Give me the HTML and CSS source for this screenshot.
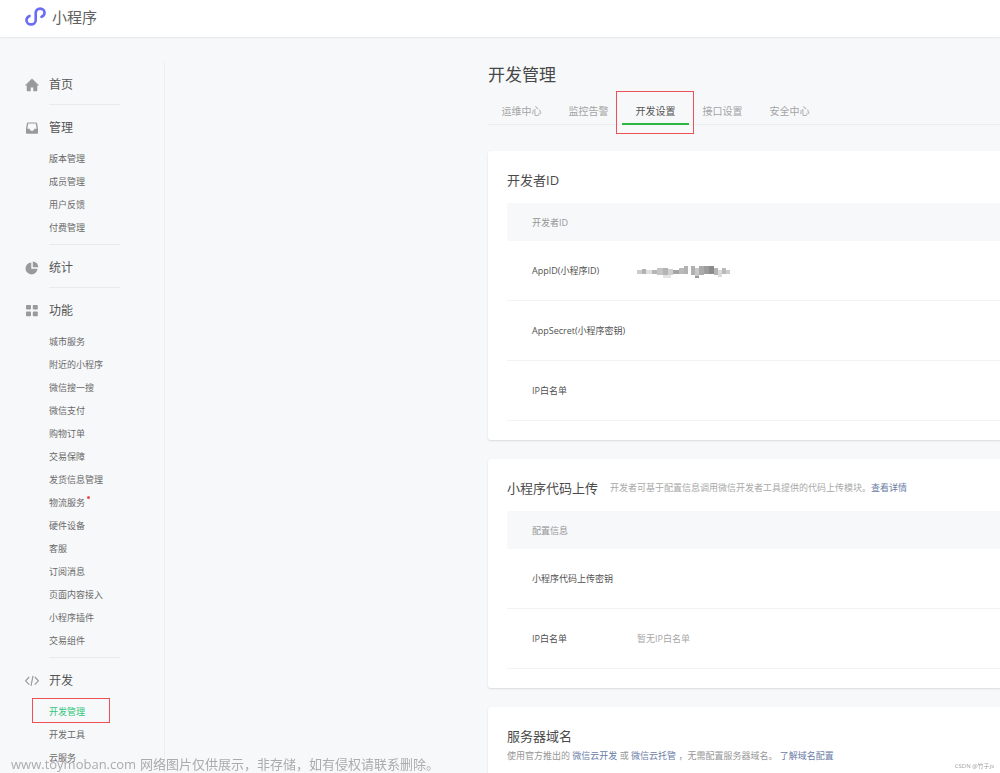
FILE: index.html
```html
<!DOCTYPE html>
<html lang="zh-CN">
<head>
<meta charset="utf-8">
<meta name="viewport" content="width=device-width, initial-scale=1">
<title>小程序 - 开发管理</title>
<link rel="stylesheet" href="styles.css">
</head>
<body>
<div class="app">
  <header class="topbar">
    <a class="brand" href="#">
      <svg class="brand-logo" viewBox="0 0 20 18" aria-hidden="true"><path d="M4.3 8.5C2.6 9.2 1.4 10.7 1.4 12.5c0 2.3 2 4 4.4 4s4.4-1.7 4.4-4V5.4c0-2.2 1.900-3.900 4.200-3.900s4.200 1.700 4.200 3.900c0 1.800-1.200 3.300-2.900 3.900" fill="none" stroke="#6a6cf3" stroke-width="2.500" stroke-linecap="round"/></svg>
      <span>小程序</span>
    </a>
  </header>
  <div class="body">
    <nav class="sidebar">
      <section class="group">
        <a class="group-title" href="#">
          <svg class="icon" viewBox="0 0 14 14" aria-hidden="true"><path d="M7 .8 13.6 7.3H12V13H8.500V9.200h-3V13H2V7.300H.4z" fill="#9a9a9a" stroke="#9a9a9a" stroke-width=".5" stroke-linejoin="round"/></svg>
          首页</a>
      </section>
      <hr class="divider">
      <section class="group">
        <a class="group-title" href="#">
          <svg class="icon" viewBox="0 0 14 14" aria-hidden="true"><path fill-rule="evenodd" d="M3 1.4h8c.6 0 1 .3 1.100.9l.9 5.500v3.900c0 .6-.4 1-1 1H2c-.6 0-1-.4-1-1V7.800l.9-5.500C2 1.700 2.400 1.400 3 1.400zM3.200 2.600 2.400 7.800h2.200c.2 1.300 1.200 2.100 2.400 2.100s2.200-.8 2.400-2.100h2.200l-.8-5.200z" fill="#9a9a9a"/></svg>
          管理</a>
        <ul class="links">
          <li><a href="#">版本管理</a></li>
          <li><a href="#">成员管理</a></li>
          <li><a href="#">用户反馈</a></li>
          <li><a href="#">付费管理</a></li>
        </ul>
      </section>
      <hr class="divider">
      <section class="group">
        <a class="group-title" href="#">
          <svg class="icon" viewBox="0 0 14 14" aria-hidden="true"><path d="M6.300 1.400v6.300h6.200A6 6 0 1 1 6.300 1.400z" fill="#9a9a9a"/><path d="M7.800.6a5.700 5.700 0 0 1 5.500 5.700H7.800z" fill="#9a9a9a"/></svg>
          统计</a>
      </section>
      <hr class="divider">
      <section class="group">
        <a class="group-title" href="#">
          <svg class="icon" viewBox="0 0 14 14" aria-hidden="true" fill="#9a9a9a"><rect x="1" y="1" width="5" height="4.600" rx=".8"/><rect x="7.800" y="1" width="5" height="4.600" rx=".8"/><rect x="1" y="7.600" width="5" height="4.600" rx=".8"/><rect x="7.800" y="7.600" width="5" height="4.600" rx=".8"/></svg>
          功能</a>
        <ul class="links">
          <li><a href="#">城市服务</a></li>
          <li><a href="#">附近的小程序</a></li>
          <li><a href="#">微信搜一搜</a></li>
          <li><a href="#">微信支付</a></li>
          <li><a href="#">购物订单</a></li>
          <li><a href="#">交易保障</a></li>
          <li><a href="#">发货信息管理</a></li>
          <li><a class="has-dot" href="#">物流服务</a></li>
          <li><a href="#">硬件设备</a></li>
          <li><a href="#">客服</a></li>
          <li><a href="#">订阅消息</a></li>
          <li><a href="#">页面内容接入</a></li>
          <li><a href="#">小程序插件</a></li>
          <li><a href="#">交易组件</a></li>
        </ul>
      </section>
      <hr class="divider">
      <section class="group">
        <a class="group-title" href="#">
          <svg class="icon" viewBox="0 0 14 14" aria-hidden="true" fill="none" stroke="#9a9a9a" stroke-width="1.200"><path d="M4.200 3 .6 6.800l3.600 3.800M9.800 3l3.600 3.800-3.600 3.800M8 1.800 6 11.800"/></svg>
          开发</a>
        <ul class="links">
          <li><a class="current marked" href="#" aria-current="page">开发管理</a></li>
          <li><a href="#">开发工具</a></li>
          <li><a href="#">云服务</a></li>
        </ul>
      </section>
    </nav>
    <main class="content">
      <h1 class="page-title">开发管理</h1>
      <nav class="tabs">
        <a class="tab" href="#">运维中心</a>
        <a class="tab" href="#">监控告警</a>
        <a class="tab active marked" href="#">开发设置</a>
        <a class="tab" href="#">接口设置</a>
        <a class="tab" href="#">安全中心</a>
      </nav>

      <section class="card">
        <div class="card-head"><h2>开发者ID</h2></div>
        <table class="info">
          <colgroup><col class="col-name"><col></colgroup>
          <thead><tr><th colspan="2" scope="col">开发者ID</th></tr></thead>
          <tbody>
            <tr>
              <th scope="row">AppID(小程序ID)</th>
              <td><svg class="mosaic" viewBox="0 0 96 16" role="img" aria-label="已隐藏">
                <g fill="#b9b9b9"><rect x="0" y="7" width="5" height="4" fill="#ccc"/><rect x="5" y="6" width="4" height="5" fill="#b2b2b2"/><rect x="9" y="7" width="6" height="4" fill="#dedede"/><rect x="15" y="7" width="5" height="4" fill="#b5b5b5"/><rect x="20" y="5" width="6" height="7" fill="#c4c4c4"/><rect x="26" y="5" width="5" height="7" fill="#b4b4b4"/><rect x="26" y="12" width="8" height="3" fill="#e4e4e4"/><rect x="31" y="6" width="5" height="6" fill="#cfcfcf"/><rect x="36" y="7" width="6" height="4" fill="#a4a4a4"/><rect x="42" y="5" width="5" height="6"/><rect x="47" y="3" width="4" height="8" fill="#b2b2b2"/><rect x="54" y="3" width="4" height="9" fill="#b0b0b0"/><rect x="58" y="5" width="4" height="8" fill="#c8c8c8"/><rect x="58" y="13" width="4" height="2" fill="#999"/><rect x="62" y="3" width="5" height="9" fill="#aaa"/><rect x="67" y="3" width="5" height="8" fill="#9c9c9c"/><rect x="72" y="3" width="5" height="8" fill="#8b8b8b"/><rect x="77" y="5" width="4" height="7" fill="#b4b4b4"/><rect x="81" y="7" width="4" height="7" fill="#dadada"/><rect x="85" y="5" width="4" height="6"/><rect x="89" y="7" width="4" height="4" fill="#ccc"/></g>
              </svg></td>
            </tr>
            <tr><th scope="row">AppSecret(小程序密钥)</th><td></td></tr>
            <tr><th scope="row">IP白名单</th><td></td></tr>
          </tbody>
        </table>
      </section>

      <section class="card">
        <div class="card-head">
          <h2>小程序代码上传</h2>
          <p class="note">开发者可基于配置信息调用微信开发者工具提供的代码上传模块。<a href="#">查看详情</a></p>
        </div>
        <table class="info">
          <colgroup><col class="col-name"><col></colgroup>
          <thead><tr><th colspan="2" scope="col">配置信息</th></tr></thead>
          <tbody>
            <tr><th scope="row">小程序代码上传密钥</th><td></td></tr>
            <tr><th scope="row">IP白名单</th><td>暂无IP白名单</td></tr>
          </tbody>
        </table>
      </section>

      <section class="card">
        <div class="card-head"><h2>服务器域名</h2></div>
        <p class="note dark">使用官方推出的 <a href="#">微信云开发</a> 或 <a href="#">微信云托管</a> ，无需配置服务器域名。 <a href="#">了解域名配置</a></p>
      </section>
    </main>
  </div>
  <div class="watermark"><span>www.toymoban.com</span><span>网络图片仅供展示，非存储，如有侵权请联系删除。</span></div>
  <div class="credit">CSDN @竹子js</div>
</div>
</body>
</html>
```

FILE: styles.css
```css
* {
  box-sizing: border-box;
}

body,
h1,
h2,
p,
ul {
  margin: 0;
  padding: 0;
}

body {
  background: #f7f8fa;
  color: #555;
  font-family: "Open Sans", "Noto Sans CJK SC", sans-serif;
  font-size: 9px;
}

a {
  color: inherit;
  text-decoration: none;
}

h1,
h2,
th {
  font-weight: 400;
}

.app {
  display: flex;
  flex-direction: column;
  height: 100vh;
  overflow: hidden;
}

.topbar {
  display: flex;
  flex: none;
  align-items: center;
  padding: 0 25px 4px;
  height: 37px;
  background: #fff;
  box-shadow: 0 1px 2px rgba(0, 0, 0, 0.08);
}

.brand {
  display: flex;
  align-items: center;
  gap: 6px;
  color: #606060;
  font-size: 15px;
  line-height: 20px;
}

.brand-logo {
  width: 21px;
  height: 19px;
}

.body {
  display: flex;
  flex: 1;
  align-items: stretch;
  min-height: 0;
  padding-top: 25px;
}

.sidebar {
  flex: none;
  width: 165px;
  border-right: 1px solid #eeeff1;
}

.group {
  padding: 13px 0 5px 25px;
}

.group-title {
  display: flex;
  align-items: center;
  gap: 10px;
  margin-bottom: 4px;
  font-size: 12px;
  line-height: 20px;
}

.icon {
  flex: none;
  width: 14px;
  height: 14px;
}

.divider {
  width: 71px;
  height: 1px;
  margin: 0 0 0 49px;
  border: 0;
  background: #e9eaec;
}

.links {
  padding: 5px 0 0 24px;
  list-style: none;
  color: #696969;
  line-height: 23px;
}

.links li {
  height: 23px;
}

.links a {
  position: relative;
}

.links .current {
  color: #2fc67a;
}

.has-dot::after {
  position: absolute;
  top: 0;
  right: -5px;
  width: 3px;
  height: 3px;
  border-radius: 50%;
  background: #f04848;
  content: "";
}

.marked::before {
  position: absolute;
  border: 1px solid #ee5058;
  content: "";
}

.links .marked::before {
  top: -7px;
  right: -25px;
  bottom: -5px;
  left: -17px;
}

.content {
  flex: 1;
  min-width: 0;
  padding-left: 323px;
}

.page-title {
  color: #484848;
  font-size: 17px;
  line-height: 25px;
}

.tabs {
  display: flex;
  height: 38px;
  margin-bottom: 26px;
  border-bottom: 1px solid #eceef0;
  color: #a4a4a4;
  font-size: 10px;
}

.tab {
  position: relative;
  width: 67px;
  padding-top: 14px;
  height: 38px;
  line-height: 20px;
  text-align: center;
}

.tab.active {
  border-bottom: 2px solid #2db742;
  color: #555;
}

.tab.marked::before {
  top: 4px;
  right: -5px;
  bottom: -11px;
  left: -6px;
}

.card {
  margin-bottom: 19px;
  padding: 19px 0 19px 19px;
  border-radius: 3px 0 0 3px;
  background: #fff;
  box-shadow: 0 1px 2px rgba(0, 0, 0, 0.12);
}

.card-head {
  display: flex;
  align-items: center;
  gap: 12px;
}

.card h2 {
  color: #4a4a4a;
  font-size: 13px;
  line-height: 20px;
}

.note {
  color: #a8a8a8;
  line-height: 20px;
}

.note.dark {
  color: #969696;
}

.note a {
  color: #6a7ca6;
}

.info {
  width: 100%;
  margin-top: 13px;
  border-spacing: 0;
  table-layout: fixed;
  text-align: left;
}

.col-name {
  width: 130px;
}

.info th,
.info td {
  padding: 0;
  text-align: left;
}

.info thead th {
  height: 38px;
  padding-left: 25px;
  background: #f7f8fa;
  color: #969696;
}

.info tbody th,
.info tbody td {
  height: 60px;
  border-bottom: 1px solid #f1f2f3;
}

.info tbody th {
  padding-left: 25px;
  color: #505050;
  white-space: nowrap;
}

.info td {
  color: #a8a8a8;
}

.mosaic {
  display: block;
  width: 96px;
  height: 16px;
}

.watermark {
  position: fixed;
  bottom: 0;
  left: 11px;
  display: flex;
  gap: 4px;
  color: rgba(120, 120, 120, 0.6);
  font-size: 13px;
  line-height: 18px;
  white-space: nowrap;
}

.credit {
  position: fixed;
  right: 6px;
  bottom: 2px;
  color: #a0a0a0;
  font-size: 6px;
  line-height: 10px;
}
```
